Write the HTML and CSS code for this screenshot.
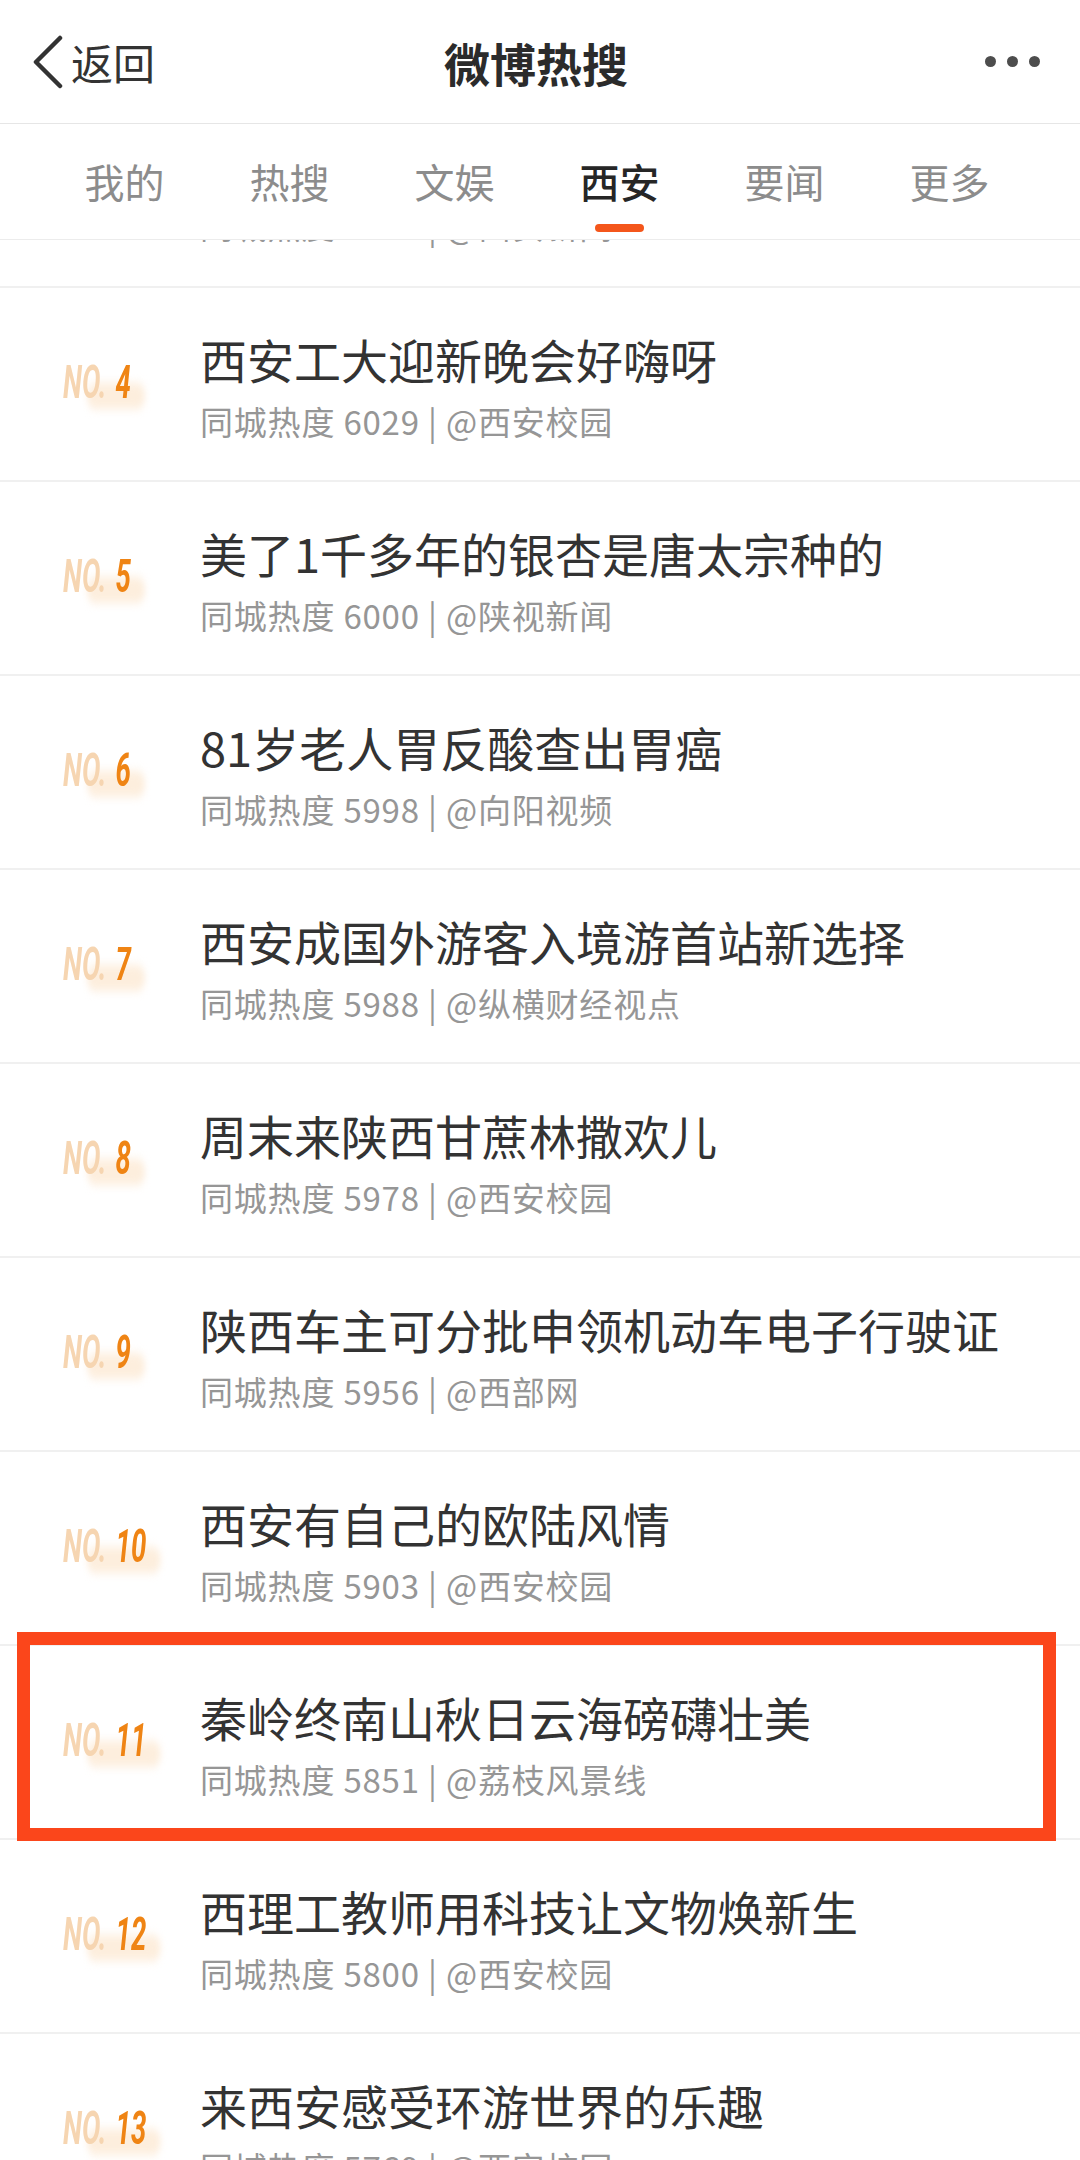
FILE: index.html
```html
<!DOCTYPE html>
<html lang="zh-CN">
<head>
<meta charset="utf-8">
<title>微博热搜</title>
<link rel="stylesheet" href="styles.css">
</head>
<body>
<div class="page">
  <header class="nav">
    <div class="nav-left">
      <svg class="chev" width="32" height="54" viewBox="0 0 32 54"><polyline points="28,3 4,27 28,51" fill="none" stroke="#333" stroke-width="4.5" stroke-linecap="round" stroke-linejoin="round"/></svg>
      <span class="back">返回</span>
    </div>
    <h1 class="nav-title">微博热搜</h1>
    <div class="nav-right"><span class="dot"></span><span class="dot"></span><span class="dot"></span></div>
  </header>
  <nav class="tabs">
    <div class="tab"><span class="tab-label">我的</span><span class="tab-bar"></span></div>
    <div class="tab"><span class="tab-label">热搜</span><span class="tab-bar"></span></div>
    <div class="tab"><span class="tab-label">文娱</span><span class="tab-bar"></span></div>
    <div class="tab active"><span class="tab-label">西安</span><span class="tab-bar"></span></div>
    <div class="tab"><span class="tab-label">要闻</span><span class="tab-bar"></span></div>
    <div class="tab"><span class="tab-label">更多</span><span class="tab-bar"></span></div>
  </nav>
  <div class="viewport">
    <ul class="list">
      <li class="row partial">
        <div class="rank-col"></div>
        <div class="text-col"><p class="sub">同城热度 6108 | @西安新闻</p></div>
      </li>
      <li class="row">
        <div class="rank-col"><span class="rank"><span class="no">NO.</span><span class="num">4</span></span></div>
        <div class="text-col"><p class="title">西安工大迎新晚会好嗨呀</p><p class="sub">同城热度 6029 | @西安校园</p></div>
      </li>
      <li class="row">
        <div class="rank-col"><span class="rank"><span class="no">NO.</span><span class="num">5</span></span></div>
        <div class="text-col"><p class="title">美了1千多年的银杏是唐太宗种的</p><p class="sub">同城热度 6000 | @陕视新闻</p></div>
      </li>
      <li class="row">
        <div class="rank-col"><span class="rank"><span class="no">NO.</span><span class="num">6</span></span></div>
        <div class="text-col"><p class="title">81岁老人胃反酸查出胃癌</p><p class="sub">同城热度 5998 | @向阳视频</p></div>
      </li>
      <li class="row">
        <div class="rank-col"><span class="rank"><span class="no">NO.</span><span class="num">7</span></span></div>
        <div class="text-col"><p class="title">西安成国外游客入境游首站新选择</p><p class="sub">同城热度 5988 | @纵横财经视点</p></div>
      </li>
      <li class="row">
        <div class="rank-col"><span class="rank"><span class="no">NO.</span><span class="num">8</span></span></div>
        <div class="text-col"><p class="title">周末来陕西甘蔗林撒欢儿</p><p class="sub">同城热度 5978 | @西安校园</p></div>
      </li>
      <li class="row">
        <div class="rank-col"><span class="rank"><span class="no">NO.</span><span class="num">9</span></span></div>
        <div class="text-col"><p class="title">陕西车主可分批申领机动车电子行驶证</p><p class="sub">同城热度 5956 | @西部网</p></div>
      </li>
      <li class="row">
        <div class="rank-col"><span class="rank"><span class="no">NO.</span><span class="num">10</span></span></div>
        <div class="text-col"><p class="title">西安有自己的欧陆风情</p><p class="sub">同城热度 5903 | @西安校园</p></div>
      </li>
      <li class="row marked">
        <div class="rank-col"><span class="rank"><span class="no">NO.</span><span class="num">11</span></span></div>
        <div class="text-col"><p class="title">秦岭终南山秋日云海磅礴壮美</p><p class="sub">同城热度 5851 | @荔枝风景线</p></div>
        <span class="highlight-box"></span>
      </li>
      <li class="row">
        <div class="rank-col"><span class="rank"><span class="no">NO.</span><span class="num">12</span></span></div>
        <div class="text-col"><p class="title">西理工教师用科技让文物焕新生</p><p class="sub">同城热度 5800 | @西安校园</p></div>
      </li>
      <li class="row">
        <div class="rank-col"><span class="rank"><span class="no">NO.</span><span class="num">13</span></span></div>
        <div class="text-col"><p class="title">来西安感受环游世界的乐趣</p><p class="sub">同城热度 5769 | @西安校园</p></div>
      </li>
    </ul>
  </div>
</div>
</body>
</html>
```

FILE: styles.css
```css
* { box-sizing: border-box; }
html, body {
  margin: 0;
  padding: 0;
  background: #fff;
}
body {
  font-family: "Noto Sans CJK SC", "Noto Sans", sans-serif;
  color: #333;
}
.page {
  width: 1080px;
  height: 2160px;
  overflow: hidden;
  display: flex;
  flex-direction: column;
}

/* Nav bar */
.nav {
  height: 124px;
  flex: none;
  display: flex;
  align-items: center;
  padding: 0 40px 0 32px;
  border-bottom: 1px solid #e6e6e6;
}
.nav-left {
  flex: 1;
  display: flex;
  align-items: center;
  gap: 7px;
}
.chev { display: block; }
.back {
  font-size: 42px;
  line-height: 1;
  color: #333;
}
.nav-title {
  margin: 0;
  font-size: 46px;
  font-weight: 700;
  color: #2b2b2b;
  line-height: 1;
}
.nav-right {
  flex: 1;
  display: flex;
  justify-content: flex-end;
  align-items: center;
  gap: 11px;
}
.dot {
  width: 11px;
  height: 11px;
  border-radius: 50%;
  background: #4d4d4d;
}

/* Tabs */
.tabs {
  height: 116px;
  flex: none;
  display: flex;
  padding-left: 42px;
  border-bottom: 1px solid #ececec;
  background: #fff;
}
.tab {
  width: 165px;
  display: flex;
  flex-direction: column;
  align-items: center;
  padding-top: 29px;
}
.tab-label {
  font-size: 40px;
  line-height: 56px;
  color: #8c8c8c;
}
.tab-bar {
  margin-top: 15px;
  width: 49px;
  height: 8px;
  border-radius: 4px;
}
.tab.active .tab-label {
  color: #262626;
  font-weight: 500;
}
.tab.active .tab-bar {
  background: #f4561b;
}

/* List */
.viewport {
  flex: 1;
  overflow: hidden;
}
.list {
  list-style: none;
  margin: 0;
  padding: 0;
}
.row {
  position: relative;
  height: 194px;
  display: flex;
  border-bottom: 2px solid #f0f0f0;
}
.row.partial {
  height: 48px;
  align-items: flex-end;
}
.row.partial .text-col {
  padding-top: 0;
  height: 46px;
  overflow: hidden;
}
.row.partial .sub {
  margin-top: -37px;
}
.rank-col {
  width: 200px;
  flex: none;
  display: flex;
  align-items: center;
  padding-left: 63px;
}
.rank {
  position: relative;
  isolation: isolate;
  display: inline-block;
  font-family: Roboto, "Liberation Sans", sans-serif;
  font-style: italic;
  font-weight: 700;
  font-size: 46px;
  line-height: 1;
  white-space: nowrap;
  transform: scaleX(0.6);
  transform-origin: left center;
  margin-top: -4px;
}
.rank::after {
  content: "";
  position: absolute;
  left: 40px;
  right: -24px;
  bottom: -4px;
  height: 26px;
  border-radius: 13px;
  background: #fdeedd;
  filter: blur(5px);
  z-index: -1;
}
.no {
  color: #f6d5b1;
  font-weight: 700;
}
.num {
  margin-left: 15px;
  color: #ef8414;
}
.text-col {
  padding-top: 41px;
  min-width: 0;
}
.title {
  margin: 0;
  font-size: 47px;
  line-height: 60px;
  color: #333;
  white-space: nowrap;
}
.sub {
  margin: 10px 0 0 0;
  font-size: 33px;
  line-height: 44px;
  letter-spacing: 0.8px;
  color: #969696;
  white-space: nowrap;
}

/* Annotation box */
.highlight-box {
  position: absolute;
  left: 17px;
  right: 24px;
  top: -14px;
  bottom: -3px;
  border: 13px solid #fb461b;
  pointer-events: none;
}
```
